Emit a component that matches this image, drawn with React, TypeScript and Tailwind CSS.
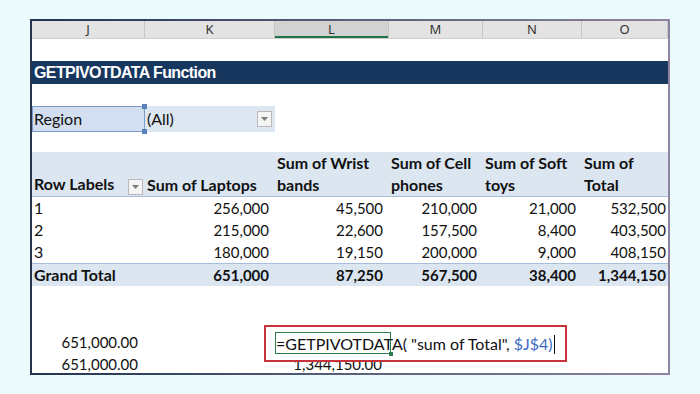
import React from "react";

const cols = "grid grid-cols-[113px_130px_114px_94px_99px_1fr]";
const F = { fontFamily: "Lato, 'Open Sans', sans-serif" };

function Dd() {
  return (
    <div className="w-[15px] h-[16px] border border-[#b9b9b9] bg-[#f4f4f4] flex items-center justify-center">
      <svg width="7" height="4" viewBox="0 0 7 4">
        <path d="M0 0 L7 0 L3.5 4 Z" fill="#7a7a7a" />
      </svg>
    </div>
  );
}

export default function App() {
  const rows = [
    ["1", "256,000", "45,500", "210,000", "21,000", "532,500"],
    ["2", "215,000", "22,600", "157,500", "8,400", "403,500"],
    ["3", "180,000", "19,150", "200,000", "9,000", "408,150"],
  ];
  return (
    <div className="w-[700px] h-[394px] bg-[#ebfbfc] pt-[19px] pl-[30px]">
      <div className="w-[640px] h-[356px] p-[2px] bg-gradient-to-r from-[#22334f] via-[#5a5f7a] to-[#8e84a2]">
        <div className="relative w-full h-full bg-white overflow-hidden text-[#111]" style={F}>
          {/* column headers */}
          <div className={`${cols} h-[18px] bg-[#e3e3e3] border-b border-[#cfcfcf] text-[13px] text-[#333]`} style={{ fontFamily: "'Noto Sans', sans-serif" }}>
            {["J", "K", "L", "M", "N", "O"].map((c) => (
              <div
                key={c}
                className={`flex items-center justify-center leading-none border-r border-[#c6c6c6] ${c === "L" ? "bg-[#d2d2d2] shadow-[inset_0_-2px_0_#217346]" : ""}`}
              >
                {c}
              </div>
            ))}
          </div>
          <div className="h-[22px]" />
          {/* title */}
          <div className="h-[23px] bg-[#17375e] flex items-center pl-[2px] text-white font-bold text-[16px] tracking-[-0.6px]" style={{ fontFamily: "'Liberation Sans', Arial, sans-serif" }}>
            GETPIVOTDATA Function
          </div>
          <div className="h-[22px]" />
          {/* region */}
          <div className={`${cols} h-[24px] text-[16px]`}>
            <div className="relative bg-[#d3dff0] border border-[#7d9bca] flex items-center pl-[1px]">
              Region
              <div className="absolute -right-[3px] -top-[3px] w-[5px] h-[5px] bg-[#5b7fb8]" />
              <div className="absolute -right-[3px] -bottom-[3px] w-[5px] h-[5px] bg-[#5b7fb8]" />
            </div>
            <div className="bg-[#dde7f2] flex items-center justify-between pl-[2px] pr-[3px]">
              <span>(All)</span>
              <Dd />
            </div>
          </div>
          <div className="h-[22px]" />
          {/* pivot header */}
          <div className={`${cols} h-[45px] bg-[#dce6f1] border-b border-[#a7bfdd] font-bold text-[16px] leading-[22px]`}>
            <div className="flex items-end justify-between pl-[2px] pr-[2px] pb-[1px]">
              <span>Row Labels</span>
              <Dd />
            </div>
            <div className="flex items-end pl-[2px]">Sum of Laptops</div>
            <div className="flex flex-col justify-end pl-[2px]"><span>Sum of Wrist</span><span>bands</span></div>
            <div className="flex flex-col justify-end pl-[2px]"><span>Sum of Cell</span><span>phones</span></div>
            <div className="flex flex-col justify-end pl-[2px]"><span>Sum of Soft</span><span>toys</span></div>
            <div className="flex flex-col justify-end pl-[2px]"><span>Sum of</span><span>Total</span></div>
          </div>
          {rows.map((r) => (
            <div key={r[0]} className={`${cols} h-[22px] text-[15px] leading-[22px]`}>
              <div className="pl-[2px] text-[16px]">{r[0]}</div>
              {r.slice(1).map((v, i) => (
                <div key={i} className={`text-right ${i === 4 ? "pr-[2px]" : "pr-[6px]"}`}>{v}</div>
              ))}
            </div>
          ))}
          <div className={`${cols} h-[23px] bg-[#dce6f1] border-t border-[#a7bfdd] font-bold text-[15px] leading-[22px]`}>
            <div className="pl-[2px] text-[16px]">Grand Total</div>
            {["651,000", "87,250", "567,500", "38,400", "1,344,150"].map((v, i) => (
              <div key={i} className={`text-right ${i === 4 ? "pr-[2px]" : "pr-[6px]"}`}>{v}</div>
            ))}
          </div>
          <div className="h-[45px]" />
          <div className={`${cols} h-[22px] text-[15px] leading-[22px]`}>
            <div className="text-right pr-[7px]">651,000.00</div>
          </div>
          <div className={`${cols} h-[22px] text-[15px] leading-[22px]`}>
            <div className="text-right pr-[7px]">651,000.00</div>
            <div />
            <div className="text-right pr-[7px]">1,344,150.00</div>
          </div>
          {/* formula overlay */}
          <div className="absolute left-[232px] top-[304px] w-[303px] h-[37px] border-2 border-[#c8323a] bg-white">
            <div className="absolute left-[9px] top-[5px] w-[116px] h-[22px] border border-[#2f7d4f]">
              <div className="absolute -right-[3px] -bottom-[3px] w-[4px] h-[4px] bg-[#2f7d4f]" />
            </div>
            <div className="absolute left-[10px] top-[7px] text-[16px] leading-[20px] whitespace-nowrap flex items-center">
              <span>=GETPIVOTDATA( "sum of Total", </span>
              <span className="text-[#3d6cc0] ml-[4px]">$J$4)</span>
              <span className="w-[1px] h-[19px] bg-[#111] ml-[1px]" />
            </div>
          </div>
        </div>
      </div>
    </div>
  );
}
